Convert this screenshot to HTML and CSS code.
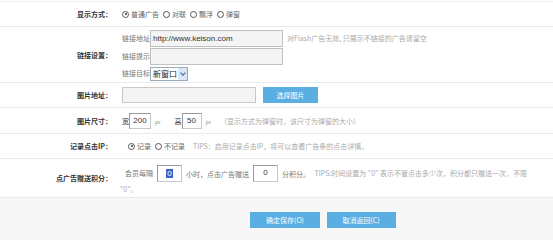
FILE: index.html
```html
<!DOCTYPE html>
<html lang="zh-CN">

<head>
    <meta charset="UTF-8">
    <title>广告设置</title>
    <link rel="stylesheet" href="styles.css">
</head>

<body>
    <div class="page">
        <div class="form">
            <!-- 显示方式 -->
            <div class="row row-type">
                <div class="label">显示方式：</div>
                <div class="field">
                    <span class="radio checked"></span><span class="opt">普通广告</span>
                    <span class="radio"></span><span class="opt">对联</span>
                    <span class="radio"></span><span class="opt">飘浮</span>
                    <span class="radio"></span><span class="opt">弹窗</span>
                </div>
            </div>

            <!-- 链接设置 -->
            <div class="row row-link">
                <div class="label">链接设置：</div>
                <div class="field link-lines">
                    <div class="line">
                        <span class="sub">链接地址</span>
                        <span class="input wide">http://www.keison.com</span>
                        <span class="tip">对Flash广告无效, 只展示不链接的广告请留空</span>
                    </div>
                    <div class="line">
                        <span class="sub">链接提示</span>
                        <span class="input wide"></span>
                    </div>
                    <div class="line">
                        <span class="sub">链接目标</span>
                        <span class="select">新窗口<span class="arrow"></span></span>
                    </div>
                </div>
            </div>

            <!-- 图片地址 -->
            <div class="row row-img">
                <div class="label">图片地址：</div>
                <div class="field">
                    <span class="input img-url"></span>
                    <button class="btn btn-pick">选择图片</button>
                </div>
            </div>

            <!-- 图片尺寸 -->
            <div class="row row-size">
                <div class="label">图片尺寸：</div>
                <div class="field">
                    <span class="sub dark">宽</span><span class="input num">200</span><span class="px">px</span>
                    <span class="sub dark gap-l">高</span><span class="input num small">50</span><span class="px">px</span>
                    <span class="tip">（显示方式为弹窗时，该尺寸为弹窗的大小）</span>
                </div>
            </div>

            <!-- 记录点击IP -->
            <div class="row row-ip">
                <div class="label">记录点击IP：</div>
                <div class="field ip-field">
                    <span class="radio checked"></span><span class="opt">记录</span>
                    <span class="radio"></span><span class="opt">不记录</span>
                    <span class="tip">TIPS：启用记录点击IP，将可以查看广告条的点击详情。</span>
                </div>
            </div>

            <!-- 点广告赠送积分 -->
            <div class="row row-score">
                <div class="label">点广告赠送积分：</div>
                <div class="field score-field">
                    <span class="sub">会员每隔</span><span class="input cnt"><span class="sel">0</span></span><span class="sub">小时，点击广告赠送</span><span class="input cnt">0</span><span class="sub">分积分。</span>
                    <span class="tip">TIPS:时间设置为 "0" 表示不管点击多少次，积分都只赠送一次，不限<br>"0"。</span>
                </div>
            </div>
        </div>

        <div class="footer">
            <button class="btn btn-save">确定保存(O)</button>
            <button class="btn btn-back">取消返回(C)</button>
        </div>
    </div>
</body>

</html>
```

FILE: styles.css
```css
* {
    margin: 0;
    padding: 0;
    box-sizing: border-box;
}

html,
body {
    overflow: hidden;
}

body {
    background-color: #fff;
    font-family: "Noto Sans CJK SC", "Liberation Sans", sans-serif;
    font-size: 7px;
    color: #666;
    height: 240px;
}

.page {
    width: 553px;
}

.form {
    margin-top: 1px;
    border-top: 1px solid #f0f0f0;
}

.row {
    display: flex;
    align-items: center;
    border-bottom: 1px solid #eaeaea;
}

.label {
    width: 112px;
    flex: none;
    text-align: right;
    font-weight: bold;
    color: #333;
    font-size: 7px;
}

.field {
    flex: 1;
    display: flex;
    align-items: center;
    padding-left: 10px;
    white-space: nowrap;
}

.row-type {
    height: 25px;
}

.row-link {
    height: 56px;
}

.row-img {
    height: 25px;
}

.row-size {
    height: 26px;
}

.row-ip {
    height: 25px;
}

.row-score {
    height: 39px;
}

/* radio */
.radio {
    display: inline-block;
    width: 7px;
    height: 7px;
    border: 1px solid #555;
    border-radius: 50%;
    position: relative;
    margin-right: 2px;
}

.radio.checked::after {
    content: "";
    position: absolute;
    left: 1.5px;
    top: 1.5px;
    width: 2px;
    height: 2px;
    border-radius: 50%;
    background: #333;
}

.opt {
    margin-right: 4px;
    color: #666;
}

/* inputs */
.input {
    display: inline-flex;
    align-items: center;
    height: 16px;
    border: 1px solid #c8c8c8;
    border-top-color: #999;
    border-left-color: #999;
    background: #fff;
    font-family: "Liberation Sans", sans-serif;
    font-size: 8px;
    color: #333;
    padding-left: 2px;
}

.wide {
    width: 133px;
    height: 17px;
    background: #f4f4f4;
    border-color: #c0c0c0;
}

.img-url {
    width: 134px;
    background: #f4f4f4;
    border-color: #c8c8c8;
}

.num {
    width: 22px;
    justify-content: center;
    padding: 0;
}

.num.small {
    width: 20px;
}

.cnt {
    width: 25px;
    height: 17px;
    justify-content: center;
    padding: 0;
    margin: 0 4px;
}

.sel {
    background: #3a64c8;
    color: #fff;
    padding: 0 1px;
    line-height: 9px;
}

.sub {
    color: #777;
}

.sub.dark {
    color: #444;
}

.gap-l {
    margin-left: 8px;
}

.px {
    font-size: 5px;
    color: #999;
    margin: 2px 6px 0 4px;
}

.tip {
    color: #aaa;
    font-size: 7px;
    margin-left: 3px;
}

/* link lines */
.link-lines {
    flex-direction: column;
    align-items: flex-start;
    gap: 1px;
    padding-top: 1px;
}

.line {
    display: flex;
    align-items: center;
}

.line .tip {
    margin-left: 4px;
}

.select {
    display: inline-flex;
    align-items: center;
    width: 38px;
    height: 14px;
    margin-top: 1px;
    border: 1px solid #9ab;
    background: #fff;
    font-size: 8px;
    color: #222;
    padding-left: 2px;
    justify-content: space-between;
}

.arrow {
    width: 9px;
    height: 12px;
    background: #dbe6f6;
    position: relative;
}

.arrow::after {
    content: "";
    position: absolute;
    left: 2.5px;
    top: 3px;
    width: 3px;
    height: 3px;
    border-right: 1.5px solid #3a5fa8;
    border-bottom: 1.5px solid #3a5fa8;
    transform: rotate(45deg);
}

/* buttons */
.btn {
    border: 0;
    background-color: #5aaee2;
    color: #fff;
    height: 16px;
    font-family: "Noto Sans CJK SC", "Liberation Sans", sans-serif;
    font-size: 7px;
    cursor: pointer;
}

.btn-pick {
    width: 55px;
    margin-left: 7px;
}

.ip-field {
    padding-left: 16px;
}

.ip-field .tip {
    margin-left: 4px;
}

.score-field {
    display: block;
    padding-left: 8px;
    padding-top: 4px;
    white-space: nowrap;
    line-height: 12px;
}

.score-field > span {
    vertical-align: middle;
}

.score-field .sub:first-child {
    margin-left: 5px;
}

.footer {
    background-color: #f7f7f7;
    height: 42px;
    padding-left: 250px;
    padding-top: 14px;
}

.btn-save {
    width: 70px;
}

.btn-back {
    width: 69px;
    margin-left: 5px;
}
```
